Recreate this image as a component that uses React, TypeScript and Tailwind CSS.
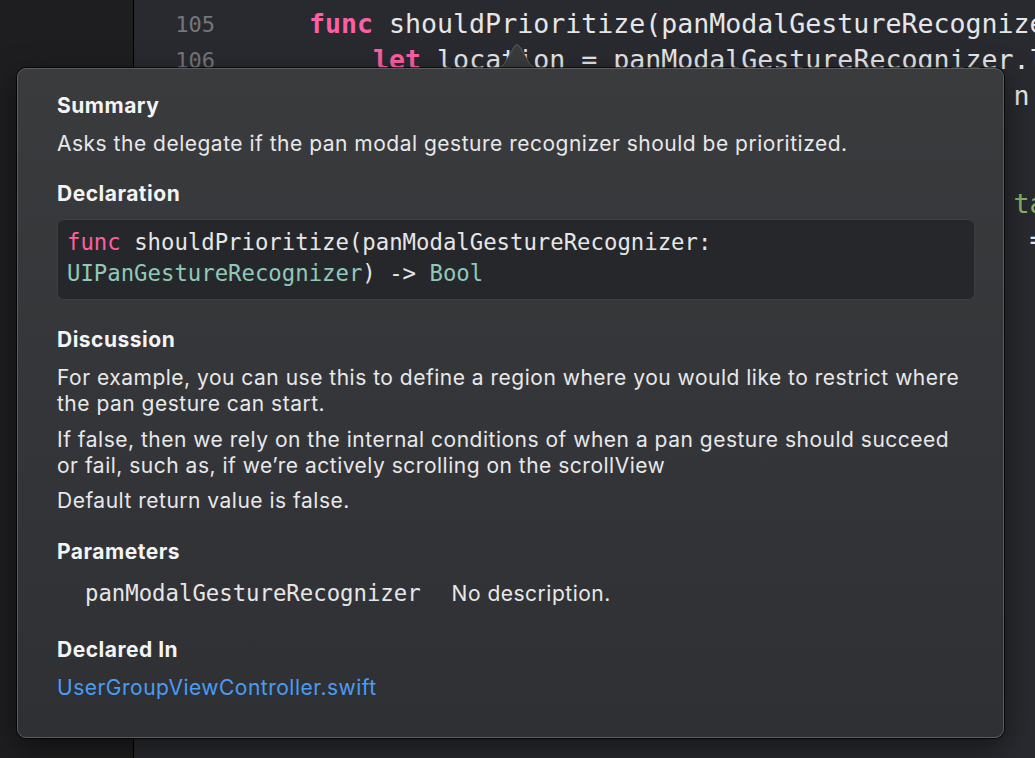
import React from 'react';

const mono = "font-['DejaVu_Sans_Mono','Liberation_Mono',monospace]";
const sans = "font-['Inter','Noto_Sans',sans-serif]";

const kw = 'text-[#fc5fa3] font-bold';

// lines behind the popover; only the left and right edges show
const editorLines: { n: number; code: React.ReactNode }[] = [
  {
    n: 105,
    code: (
      <>
        <span className={kw}>func</span> shouldPrioritize(panModalGestureRecognizer: UIPanGestureRecognizer) -&gt; Bool {'{'}
      </>
    ),
  },
  {
    n: 106,
    code: (
      <>
        {'    '}
        <span className={kw}>let</span> location = panModalGestureRecognizer.location(in: view)
      </>
    ),
  },
  { n: 107, code: <>{'    guard let view = presentedView else {'.padEnd(44) + 'n }'}</> },
  { n: 108, code: <>{''}</> },
  { n: 109, code: <>{'    '}</> },
  {
    n: 110,
    code: (
      <>
        {'        let inset = topOffset +'.padEnd(44)}
        <span className="text-[#86b766]">tableViewInset</span>
      </>
    ),
  },
  { n: 111, code: <>{'        view.frame.origin.y'.padEnd(45) + '= 0'}</> },
];

function Heading({ children, className = '' }: { children: React.ReactNode; className?: string }) {
  return (
    <div className={`text-[21px] leading-[26px] font-bold tracking-[0.5px] text-[#f4f4f5] ${className}`}>{children}</div>
  );
}

function Text({ children, className = '' }: { children: React.ReactNode; className?: string }) {
  return <p className={`text-[21px] leading-[26px] tracking-[0.5px] text-[#e8e8e9] ${className}`}>{children}</p>;
}

function Arrow() {
  return (
    <svg className="absolute left-[492px] top-[43px]" width="50" height="27" viewBox="0 0 50 27">
      <path
        d="M0 26 C9 26 12 22 15 16 L22 4 Q25 -0.5 28 4 L35 16 C38 22 41 26 50 26"
        fill="#3a3b3d"
        stroke="#5c5c5f"
        strokeWidth="1"
      />
      <rect x="0" y="25.5" width="50" height="2" fill="#3a3b3d" />
    </svg>
  );
}

export default function App() {
  return (
    <div className={`relative flex h-[758px] w-[1035px] overflow-hidden bg-[#292a2f] ${sans}`}>
      <div className="w-[134px] shrink-0 border-r border-black bg-[#1e1e20]" />

      <div className="flex-1 pt-[6px]">
        {editorLines.map((l) => (
          <div key={l.n} className={`flex h-[36px] items-center whitespace-pre ${mono}`}>
            <span className="w-[81px] shrink-0 text-right text-[22px] text-[#75767b]">{l.n}</span>
            <span className="ml-[94px] text-[26.6px] text-[#e6e6e7]">{l.code}</span>
          </div>
        ))}
      </div>

      <Arrow />
      <div className="absolute left-[17px] top-[68px] h-[670px] w-[987px] rounded-[9px] border border-[#5c5c5f] bg-gradient-to-b from-[#3a3b3d] to-[#2f3034] pl-[39px] pr-[28px] pt-[24px] shadow-[0_0_0_1px_rgba(0,0,0,0.7),0_10px_30px_rgba(0,0,0,0.5)]">
        <Heading>Summary</Heading>
        <Text className="mt-[12px]">Asks the delegate if the pan modal gesture recognizer should be prioritized.</Text>

        <Heading className="mt-[24px]">Declaration</Heading>
        <div className={`mt-[12px] h-[81px] rounded-[7px] border border-[#3d3e42] bg-[#26272b] px-[9px] pt-[7px] text-[22.3px] leading-[31px] whitespace-pre text-[#e6e6e7] ${mono}`}>
          <div>
            <span className="text-[#fc5fa3]">func</span> shouldPrioritize(panModalGestureRecognizer:
          </div>
          <div>
            <span className="text-[#8fc9b9]">UIPanGestureRecognizer</span>) -&gt; <span className="text-[#8fc9b9]">Bool</span>
          </div>
        </div>

        <Heading className="mt-[27px]">Discussion</Heading>
        <Text className="mt-[12px]">
          For example, you can use this to define a region where you would like to restrict where
          <br />
          the pan gesture can start.
        </Text>
        <Text className="mt-[10px]">
          If false, then we rely on the internal conditions of when a pan gesture should succeed
          <br />
          or fail, such as, if we’re actively scrolling on the scrollView
        </Text>
        <Text className="mt-[9px]">Default return value is false.</Text>

        <Heading className="mt-[25px]">Parameters</Heading>
        <div className="mt-[16px] flex h-[26px] items-center pl-[28px]">
          <span className={`text-[22.3px] text-[#e6e6e7] ${mono}`}>panModalGestureRecognizer</span>
          <span className="ml-[31px] text-[21px] tracking-[0.5px] text-[#e8e8e9]">No description.</span>
        </div>

        <Heading className="mt-[30px]">Declared In</Heading>
        <Text className="mt-[12px]">
          <span className="text-[#4a9cf5]">UserGroupViewController.swift</span>
        </Text>
      </div>
    </div>
  );
}
